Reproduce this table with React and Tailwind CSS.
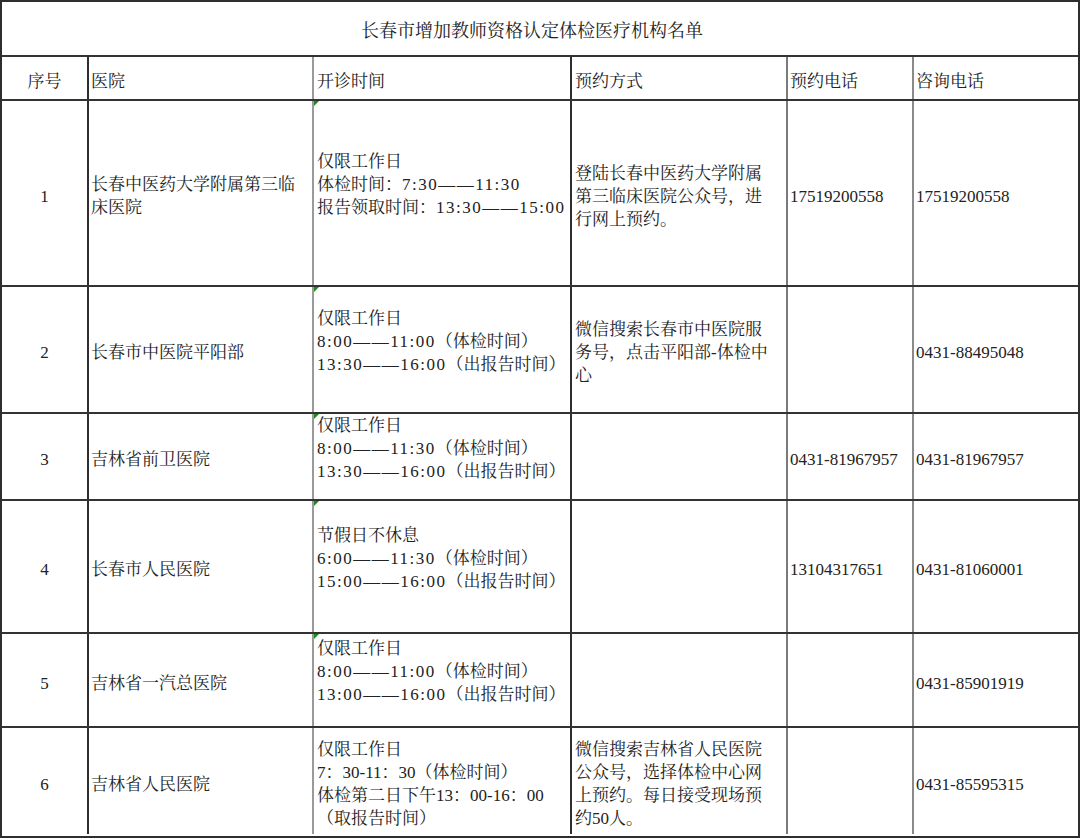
import React from 'react';

const cols = [
  { border: 'border-r-[#2e2e2e]' },
  { border: 'border-r-[#9a9a9a]' },
  { border: 'border-r-[#2e2e2e]' },
  { border: 'border-r-[#7a7a7a]' },
  { border: 'border-r-[#8a8a8a]' },
];

const rows = [
  {
    h: 'h-[186px]',
    no: '1',
    name: ['长春中医药大学附属第三临', '床医院'],
    time: ['仅限工作日', '体检时间：7:30——11:30', '报告领取时间：13:30——15:00', ''],
    mark: true,
    way: ['登陆长春中医药大学附属', '第三临床医院公众号，进', '行网上预约。'],
    tel: '17519200558',
    ask: '17519200558',
  },
  {
    h: 'h-[127px]',
    no: '2',
    name: ['长春市中医院平阳部'],
    time: ['仅限工作日', '8:00——11:00（体检时间）', '13:30——16:00（出报告时间）', ''],
    mark: true,
    way: ['微信搜索长春市中医院服', '务号，点击平阳部-体检中', '心'],
    tel: '',
    ask: '0431-88495048',
  },
  {
    h: 'h-[87px]',
    no: '3',
    name: ['吉林省前卫医院'],
    time: ['仅限工作日', '8:00——11:30（体检时间）', '13:30——16:00（出报告时间）', ''],
    mark: true,
    way: [],
    tel: '0431-81967957',
    ask: '0431-81967957',
  },
  {
    h: 'h-[133px]',
    no: '4',
    name: ['长春市人民医院'],
    time: ['节假日不休息', '6:00——11:30（体检时间）', '15:00——16:00（出报告时间）', ''],
    mark: true,
    way: [],
    tel: '13104317651',
    ask: '0431-81060001',
  },
  {
    h: 'h-[94px]',
    no: '5',
    name: ['吉林省一汽总医院'],
    time: ['仅限工作日', '8:00——11:00（体检时间）', '13:00——16:00（出报告时间）', ''],
    mark: true,
    way: [],
    tel: '',
    ask: '0431-85901919',
  },
  {
    h: 'h-[106px]',
    no: '6',
    name: ['吉林省人民医院'],
    time: ['仅限工作日', '7：30-11：30（体检时间）', '体检第二日下午13：00-16：00', '（取报告时间）'],
    mark: false,
    way: ['微信搜索吉林省人民医院', '公众号，选择体检中心网', '上预约。每日接受现场预', '约50人。'],
    tel: '',
    ask: '0431-85595315',
    last: true,
  },
];

const gridCols = 'grid grid-cols-[87px_225px_258px_216px_126px_164px] grid-rows-1';

// the sheet draws times with half-width fixed digits, so spread the runs a bit
const spread = (text) =>
  text.split(/([0-9:—]+)/).map((part, i) =>
    /[0-9:—]/.test(part) ? (
      <span key={i} className="tracking-[1.5px]">{part}</span>
    ) : (
      part
    )
  );

const Lines = ({ lines, wide }) => (
  <div>
    {lines.map((l, i) =>
      l ? (
        <div key={i} className="whitespace-nowrap">{wide ? spread(l) : l}</div>
      ) : (
        <div key={i} className="h-[23px]" />
      )
    )}
  </div>
);

const Cell = ({ i, children, center, className = '' }) => (
  <div
    className={`${i < 5 ? `border-r-2 ${cols[i].border}` : ''} flex items-center min-h-0 pt-[6px] ${
      center ? 'justify-center' : 'pl-[2px]'
    } relative ${className}`}
  >
    {children}
  </div>
);

export default function App() {
  return (
    <div className="w-[1080px] h-[839px] bg-white font-['Liberation_Serif','Noto_Serif_CJK_SC','Noto_Sans_CJK_SC',serif] text-[17px] leading-[23px] text-[#222]">
      <div className="w-[1080px] h-[838px] border-2 border-[#2e2e2e]">
        <div className="h-[55px] border-b-2 border-b-[#333] flex items-center justify-center pt-[6px] pr-4 text-[18px]">
          长春市增加教师资格认定体检医疗机构名单
        </div>
        <div className={`${gridCols} h-[44px] border-b-2 border-b-[#333]`}>
          <Cell i={0} center>序号</Cell>
          <Cell i={1}>医院</Cell>
          <Cell i={2} className="pl-[3px]">开诊时间</Cell>
          <Cell i={3} className="pl-[3px]">预约方式</Cell>
          <Cell i={4}>预约电话</Cell>
          <Cell i={5}>咨询电话</Cell>
        </div>
        {rows.map((r) => (
          <div
            key={r.no}
            className={`${gridCols} ${r.h} ${r.last ? '' : 'border-b-2 border-b-[#333]'}`}
          >
            <Cell i={0} center>{r.no}</Cell>
            <Cell i={1}>
              <Lines lines={r.name} />
            </Cell>
            <Cell i={2} className="pl-[3px]">
              {r.mark && (
                <span className="absolute top-0 left-0 w-0 h-0 border-t-[5px] border-r-[5px] border-t-[#1d8a1d] border-r-transparent" />
              )}
              <Lines lines={r.time} wide={r.mark} />
            </Cell>
            <Cell i={3} className="pl-[3px]">
              <Lines lines={r.way} />
            </Cell>
            <Cell i={4}>{r.tel}</Cell>
            <Cell i={5}>{r.ask}</Cell>
          </div>
        ))}
      </div>
    </div>
  );
}
